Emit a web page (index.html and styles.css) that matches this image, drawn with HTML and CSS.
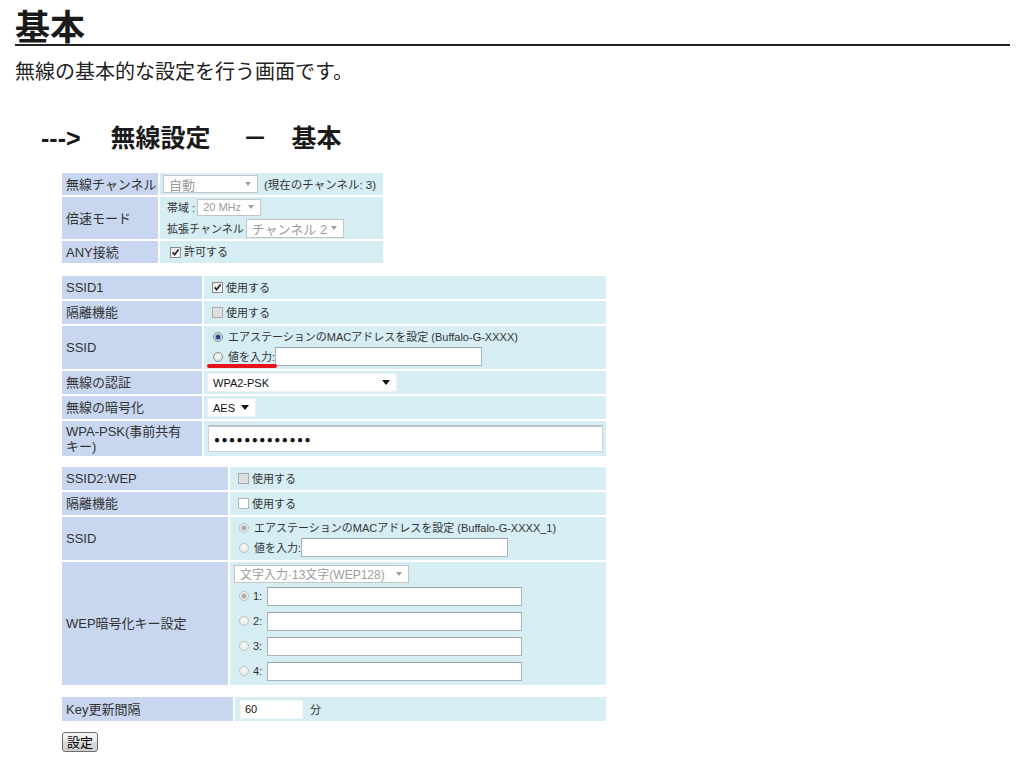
FILE: index.html
```html
<!DOCTYPE html>
<html lang="ja">
<head>
<meta charset="utf-8">
<title>基本</title>
<link rel="stylesheet" href="styles.css">
</head>
<body>
<h1 class="page-title">基本</h1>
<p class="lead">無線の基本的な設定を行う画面です。</p>
<h2 class="section-title"><span class="arrow">---&gt;</span><span class="st-main">無線設定</span><span class="st-dash">－</span><span class="st-sub">基本</span></h2>

<table class="form-table t1">
  <colgroup><col class="t1-l"><col></colgroup>
  <tr class="h22">
    <td class="lbl">無線チャンネル</td>
    <td class="val"><div class="line"><span class="sel dis w95 f13">自動<i class="arr"></i></span><span class="note">(現在のチャンネル: 3)</span></div></td>
  </tr>
  <tr class="h42">
    <td class="lbl">倍速モード</td>
    <td class="val">
      <div class="stack s-gap3 ind4">
        <div class="line"><span class="sm">帯域 :</span><span class="sel dis w64 h17">20 MHz<i class="arr"></i></span></div>
        <div class="line"><span class="sm">拡張チャンネル</span><span class="sel dis w98 h19 f13">チャンネル 2<i class="arr"></i></span></div>
      </div>
    </td>
  </tr>
  <tr class="h22">
    <td class="lbl">ANY接続</td>
    <td class="val"><div class="line ind7"><span class="cb on"><svg viewBox="0 0 9 9" width="9" height="9"><path d="M1.6 4.4 L3.6 6.6 L7.6 1.4" stroke="#2b2b2b" stroke-width="1.7" fill="none"/></svg></span><span class="cbt">許可する</span></div></td>
  </tr>
</table>

<table class="form-table t2">
  <colgroup><col class="t2-l"><col></colgroup>
  <tr class="h23">
    <td class="lbl">SSID1</td>
    <td class="val"><div class="line ind5"><span class="cb on"><svg viewBox="0 0 9 9" width="9" height="9"><path d="M1.6 4.4 L3.6 6.6 L7.6 1.4" stroke="#2b2b2b" stroke-width="1.7" fill="none"/></svg></span><span class="cbt">使用する</span></div></td>
  </tr>
  <tr class="h23">
    <td class="lbl">隔離機能</td>
    <td class="val"><div class="line ind5"><span class="cb dis"></span><span class="cbt">使用する</span></div></td>
  </tr>
  <tr class="h43">
    <td class="lbl">SSID</td>
    <td class="val">
      <div class="stack s-gap2">
        <div class="line l16 ind6"><span class="radio on"></span><span class="rt">エアステーションのMACアドレスを設定 (Buffalo-G-XXXX)</span></div>
        <div class="line l19 ind6"><span class="mark"><span class="radio"></span><span class="rt">値を入力:</span></span><span class="txt w207"></span></div>
      </div>
    </td>
  </tr>
  <tr class="h23">
    <td class="lbl">無線の認証</td>
    <td class="val"><span class="sel on w190 h19">WPA2-PSK<i class="arr"></i></span></td>
  </tr>
  <tr class="h23">
    <td class="lbl">無線の暗号化</td>
    <td class="val"><span class="sel on w49 h19">AES<i class="arr"></i></span></td>
  </tr>
  <tr class="h35">
    <td class="lbl">WPA-PSK(事前共有<br>キー)</td>
    <td class="val"><div class="pw">●●●●●●●●●●●●●</div></td>
  </tr>
</table>

<table class="form-table t3">
  <colgroup><col class="t3-l"><col></colgroup>
  <tr class="h23">
    <td class="lbl">SSID2:WEP</td>
    <td class="val"><div class="line ind5"><span class="cb dis"></span><span class="cbt">使用する</span></div></td>
  </tr>
  <tr class="h23">
    <td class="lbl">隔離機能</td>
    <td class="val"><div class="line ind5"><span class="cb"></span><span class="cbt">使用する</span></div></td>
  </tr>
  <tr class="h43">
    <td class="lbl">SSID</td>
    <td class="val">
      <div class="stack s-gap2">
        <div class="line l16 ind6"><span class="radio on dis"></span><span class="rt">エアステーションのMACアドレスを設定 (Buffalo-G-XXXX_1)</span></div>
        <div class="line l19 ind6"><span class="radio dis"></span><span class="rt">値を入力:</span><span class="txt w207"></span></div>
      </div>
    </td>
  </tr>
  <tr class="h123">
    <td class="lbl">WEP暗号化キー設定</td>
    <td class="val">
      <div class="stack s-gap2">
        <div class="line ind1"><span class="sel dis w175 h18 f12">文字入力·13文字(WEP128)<i class="arr"></i></span></div>
        <div class="line l23 ind6"><span class="radio on dis"></span><span class="kn">1:</span><span class="txt w255 h23"></span></div>
        <div class="line l23 ind6"><span class="radio dis"></span><span class="kn">2:</span><span class="txt w255 h23"></span></div>
        <div class="line l23 ind6"><span class="radio dis"></span><span class="kn">3:</span><span class="txt w255 h23"></span></div>
        <div class="line l23 ind6"><span class="radio dis"></span><span class="kn">4:</span><span class="txt w255 h23"></span></div>
      </div>
    </td>
  </tr>
</table>

<table class="form-table t4">
  <colgroup><col class="t4-l"><col></colgroup>
  <tr class="h24">
    <td class="lbl">Key更新間隔</td>
    <td class="val"><div class="line ind2"><span class="txt w63 val-in">60</span><span class="unit">分</span></div></td>
  </tr>
</table>

<div class="actions"><button class="btn" type="button">設定</button></div>
</body>
</html>
```

FILE: styles.css
```css
* { box-sizing: border-box; }
html, body { margin: 0; padding: 0; background: #fff; }
body {
  padding: 0 14px 0 15px;
  font-family: "Liberation Sans", "Noto Sans CJK JP", sans-serif;
  color: #222;
}

.page-title {
  margin: 6px 0 0;
  font-family: "Noto Sans CJK JP", sans-serif;
  font-size: 35px;
  line-height: 38px;
  font-weight: 700;
  color: #1a1a1a;
  border-bottom: 2px solid #222;
}

.lead {
  margin: 13px 0 0;
  font-family: "Noto Sans CJK JP", sans-serif;
  font-size: 20px;
  line-height: 24px;
  color: #222;
}

.section-title {
  display: flex;
  align-items: baseline;
  margin: 38px 0 0 26px;
  font-family: "Noto Sans CJK JP", sans-serif;
  font-size: 25px;
  line-height: 30px;
  font-weight: 700;
  color: #1a1a1a;
}
.section-title .arrow { font-family: "Liberation Sans", sans-serif; }
.st-main { margin-left: 30px; }
.st-dash { margin-left: 32px; }
.st-sub { margin-left: 24px; }

/* tables */
.form-table {
  border-collapse: separate;
  border-spacing: 2px;
  table-layout: fixed;
  margin-left: 45px;
  font-size: 13px;
  color: #333;
}
.t1 { width: 325px; margin-top: 18px; }
.t1-l { width: 96px; }
.t2 { width: 548px; margin-top: 9px; }
.t2-l { width: 140px; }
.t3 { width: 548px; margin-top: 7px; }
.t3-l { width: 166px; }
.t4 { width: 548px; margin-top: 8px; }
.t4-l { width: 171px; }

.form-table td { padding: 0; vertical-align: middle; }
.lbl {
  background: #c8d6ef;
  padding: 0 0 0 4px !important;
  line-height: 15px;
  white-space: nowrap;
  overflow: visible;
}
.val {
  background: #d5edf3;
  padding: 0 3px !important;
  font-size: 11px;
  color: #333;
}

.h22 > td { height: 22px; }
.h23 > td { height: 23px; }
.h24 > td { height: 24px; }
.h35 > td { height: 35px; }
.h42 > td { height: 42px; }
.h43 > td { height: 43px; }
.h123 > td { height: 123px; }

.line { display: flex; align-items: center; }
.l16 { height: 16px; }
.l19 { height: 19px; }
.l23 { height: 23px; }
.stack { display: flex; flex-direction: column; }
.s-gap2 { gap: 2px; }
.s-gap3 { gap: 3px; }
.ind1 { margin-left: 1px; }
.ind2 { margin-left: 2px; }
.ind4 { margin-left: 4px; }
.ind5 { margin-left: 5px; }
.ind6 { margin-left: 6px; }
.ind7 { margin-left: 7px; }

/* select look-alike */
.sel {
  display: inline-flex;
  align-items: center;
  justify-content: space-between;
  height: 18px;
  padding: 0 6px 0 5px;
  background: #fff;
  border: 1px solid #c4c4c4;
  font-size: 11px;
  color: #9c9c9c;
  white-space: nowrap;
}
.sel .arr {
  display: inline-block;
  width: 0; height: 0;
  border-left: 3px solid transparent;
  border-right: 3px solid transparent;
  border-top: 4px solid #a0a0a0;
}
.sel.on {
  border: 1px solid #e6f2f5;
  color: #111;
  padding-left: 5px;
}
.sel.on .arr {
  border-left-width: 4px;
  border-right-width: 4px;
  border-top: 5px solid #111;
}
.f12 { font-size: 12px; }
.f13 { font-size: 13px; }
.w49 { width: 49px; }
.w63 { width: 63px; }
.w64 { width: 64px; }
.w95 { width: 95px; }
.w98 { width: 98px; }
.w175 { width: 175px; }
.w190 { width: 190px; }
.w207 { width: 207px; }
.w255 { width: 255px; }
.h17 { height: 17px; }
.h18 { height: 18px; }
.h19 { height: 19px; }
.h23 { height: 23px; }

.note { margin-left: 6px; font-size: 11.5px; color: #333; }
.sm { font-size: 11px; margin-right: 2px; color: #333; white-space: nowrap; }

/* checkbox */
.cb {
  display: inline-flex;
  align-items: center;
  justify-content: center;
  width: 11px;
  height: 11px;
  border: 1px solid #8b8b8b;
  background: linear-gradient(#e9e9e9, #fbfbfb);
}
.cb.dis { background: #dedede; border-color: #a9a9a9; }
.cb:not(.on):not(.dis) { background: #fff; border-color: #b4b4b4; }
.cbt { margin-left: 3px; line-height: 14px; }

/* radio */
.radio {
  position: relative;
  display: inline-block;
  width: 10px;
  height: 10px;
  border-radius: 50%;
  border: 1px solid #909090;
  background: radial-gradient(circle at 50% 35%, #fff, #d6d6d6);
  flex: none;
}
.radio.on::after {
  content: "";
  position: absolute;
  left: 2px; top: 2px;
  width: 4px; height: 4px;
  border-radius: 50%;
  background: #1c3d7c;
  box-shadow: 0 0 1px 1px #6d8cc4;
}
.radio.dis { border-color: #c3c3c3; background: radial-gradient(circle at 50% 35%, #fafafa, #e4e4e4); }
.radio.on.dis::after { background: #a6a6a6; box-shadow: 0 0 1px 1px #cfcfcf; }
.rt { margin-left: 5px; line-height: 14px; white-space: nowrap; }
.kn { margin-left: 4px; width: 14px; line-height: 14px; }

/* red annotation under the manual SSID option */
.mark { position: relative; display: inline-flex; align-items: center; height: 14px; }
.mark::after {
  content: "";
  position: absolute;
  left: -6px;
  right: -2px;
  bottom: -4px;
  height: 4px;
  border-radius: 2px;
  background: #e8121a;
}

/* text inputs */
.txt {
  display: inline-block;
  height: 19px;
  background: #fff;
  border: 1px solid #a9b2b8;
  border-top-color: #9aa3aa;
}
.val-in {
  display: inline-flex;
  align-items: center;
  padding-left: 4px;
  font-size: 11px;
  color: #111;
  border-color: #eef6f8;
}
.unit { margin-left: 7px; }

.pw {
  width: 395px;
  height: 27px;
  margin-left: 1px;
  padding-left: 5px;
  display: flex;
  align-items: center;
  background: #fff;
  border: 1px solid #c9d2d6;
  border-top: 2px solid #b9c3c8;
  font-family: "Liberation Sans", "DejaVu Sans", sans-serif;
  font-size: 10px;
  letter-spacing: 1.5px;
  color: #111;
}

.actions { margin: 9px 0 0 47px; }
.btn {
  height: 20px;
  width: 36px;
  padding: 0;
  font-family: "Noto Sans CJK JP", sans-serif;
  font-size: 13px;
  line-height: 16px;
  color: #000;
  border: 1px solid #6e6e6e;
  border-radius: 3px;
  background: linear-gradient(#f4f4f4, #e8e8e8 50%, #d9d9d9 51%, #cfcfcf);
}
```
